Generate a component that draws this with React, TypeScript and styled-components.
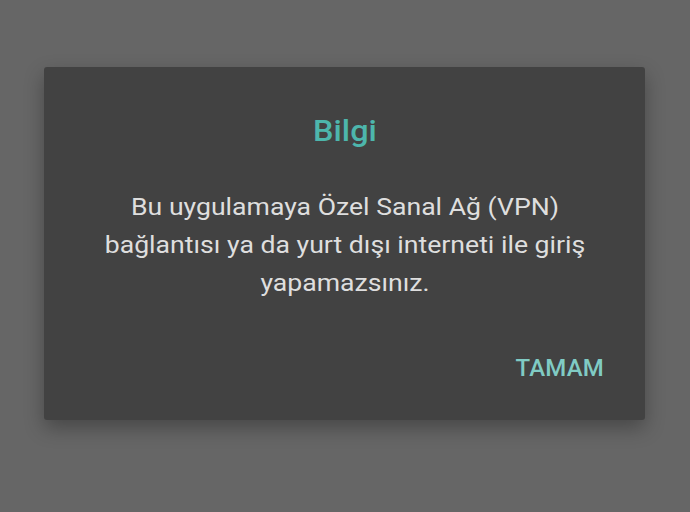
import React from 'react';
import styled, {createGlobalStyle} from "styled-components";

const GlobalStyle = createGlobalStyle`
  html, body {
    margin: 0;
    padding: 0;
    background-color: #666666;
  }
  body {
    font-family: Roboto, "Noto Sans", sans-serif;
  }
`

export default function App() {
    return (
        <Page>
            <GlobalStyle/>
            <Dialog>
                <DialogTitle>Bilgi</DialogTitle>
                <DialogText>
                    Bu uygulamaya Özel Sanal Ağ (VPN) bağlantısı ya da yurt dışı interneti ile giriş yapamazsınız.
                </DialogText>
                <DialogActions>
                    <ActionButton>TAMAM</ActionButton>
                </DialogActions>
            </Dialog>
        </Page>
    );
}

const Page = styled.div`
  width: 690px;
  height: 512px;
  box-sizing: border-box;
  padding: 67px 0 0 44px;
  background-color: #666666;
`
const Dialog = styled.div`
  width: 601px;
  height: 353px;
  box-sizing: border-box;
  background-color: #424242;
  border-radius: 3px;
  box-shadow: 0 8px 20px rgba(0, 0, 0, 0.3);
  display: flex;
  flex-direction: column;
  align-items: center;
  padding: 46px 41px 0 41px;
`
// the text in the screenshot is a little wider than plain Roboto
const DialogTitle = styled.h2`
  margin: 0;
  color: #4db6ac;
  font-family: Roboto, sans-serif;
  font-weight: 500;
  font-size: 29.5px;
  line-height: 36px;
  transform: scaleX(1.1);
`
const DialogText = styled.p`
  width: 460px;
  margin: 39px 0 0 0;
  color: #dedede;
  font-family: Roboto, sans-serif;
  font-weight: 400;
  font-size: 24px;
  line-height: 38px;
  text-align: center;
  transform: scaleX(1.109);
`
const DialogActions = styled.div`
  align-self: stretch;
  display: flex;
  justify-content: flex-end;
  margin-top: 52px;
`
const ActionButton = styled.button`
  background: none;
  border: none;
  padding: 0;
  color: #80cbc4;
  font-family: Roboto, sans-serif;
  font-weight: 500;
  font-size: 24px;
  line-height: 28px;
  letter-spacing: 0.2px;
  cursor: pointer;
`
